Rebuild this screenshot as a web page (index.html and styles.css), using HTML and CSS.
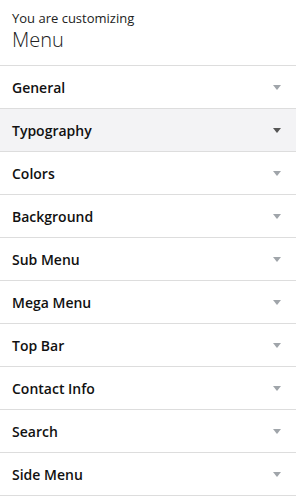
FILE: index.html
```html
<!DOCTYPE html>
<html lang="en">
    <head>
        <meta charset="utf-8" />
        <meta name="viewport" content="width=device-width, initial-scale=1" />
        <title>Customizing Menu</title>
        <link rel="stylesheet" href="styles.css">
    </head>
    <body>
        <div class="panel-header">
            <span class="customize-action">You are customizing</span>
            <span class="panel-title">Menu</span>
        </div>

        <ul class="sections">
            <li class="section">General</li>
            <li class="section active">Typography</li>
            <li class="section">Colors</li>
            <li class="section">Background</li>
            <li class="section">Sub Menu</li>
            <li class="section">Mega Menu</li>
            <li class="section">Top Bar</li>
            <li class="section">Contact Info</li>
            <li class="section">Search</li>
            <li class="section">Side Menu</li>
        </ul>
    </body>
</html>
```

FILE: styles.css
```css
body, html {
    margin: 0;
    padding: 0;
    font-family: "Open Sans", sans-serif;
    background: #fff;
    color: #23282d;
}

.panel-header {
    display: flex;
    flex-direction: column;
    padding: 9px 12px 0;
    height: 56px;
    border-bottom: 1px solid #ddd;
}

.customize-action {
    font-size: 13px;
    line-height: 18px;
    color: #222;
}

.panel-title {
    font-size: 20px;
    font-weight: 300;
    line-height: 26px;
    color: #222;
}

.sections {
    list-style: none;
    margin: 0;
    padding: 0;
}

.section {
    display: flex;
    align-items: center;
    justify-content: space-between;
    height: 42px;
    padding: 0 15px 0 12px;
    border-bottom: 1px solid #ddd;
    font-size: 14px;
    font-weight: 600;
    color: #111;
}

.section::after {
    content: "";
    border-left: 4px solid transparent;
    border-right: 4px solid transparent;
    border-top: 5px solid #a0a5aa;
}

.section.active {
    background-color: #f3f3f5;
}

.section.active::after {
    border-top-color: #555;
}
```
